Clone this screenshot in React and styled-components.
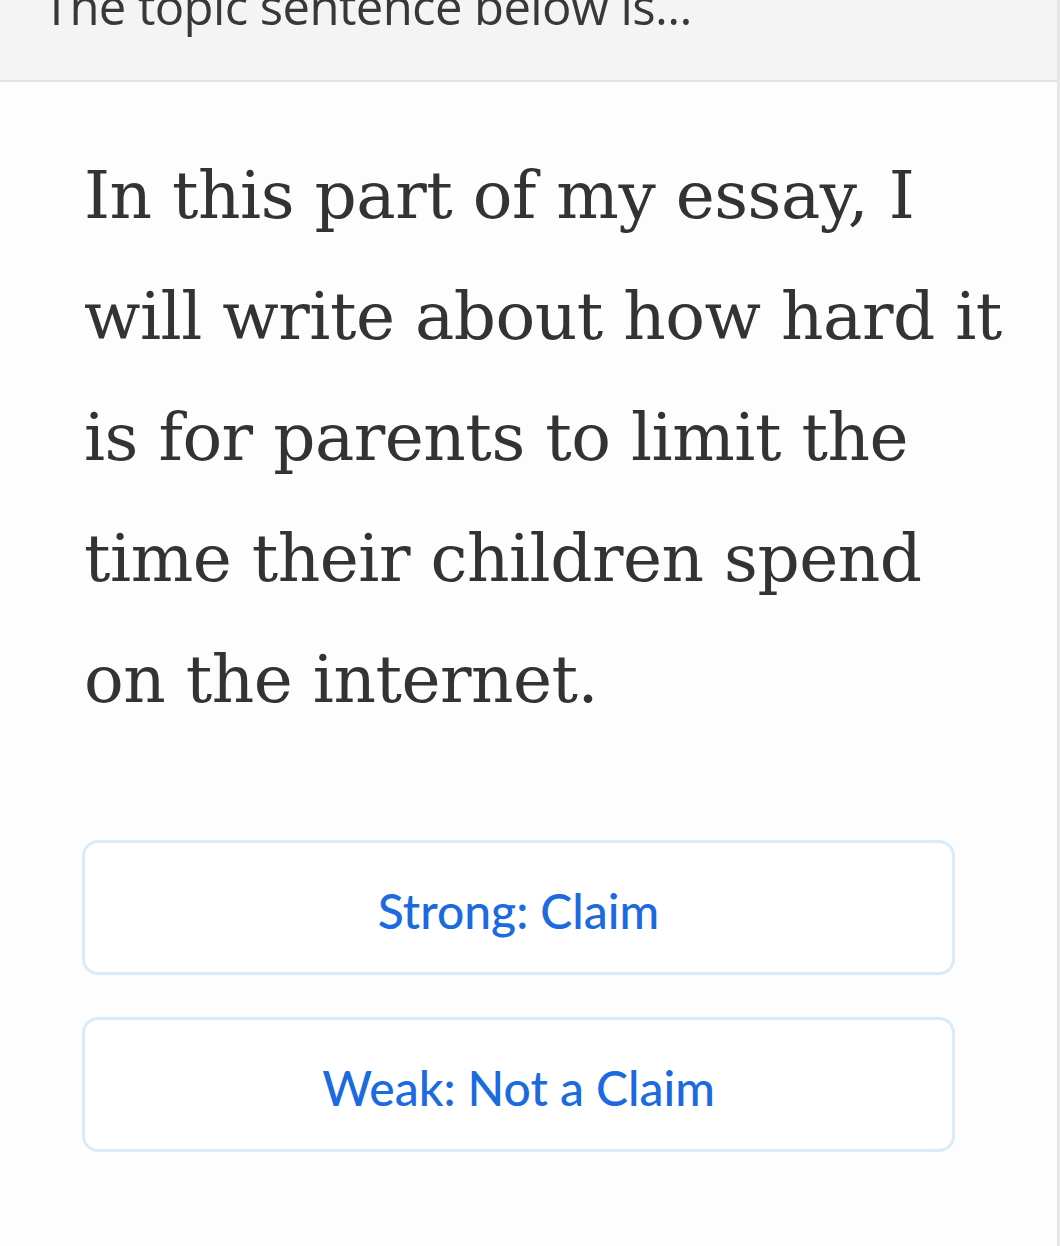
import React from 'react';
import styled, { createGlobalStyle } from 'styled-components';

const GlobalStyle = createGlobalStyle`
  html, body {
    margin: 0;
    padding: 0;
    background: #ffffff;
  }
`;

const Page = styled.div`
  width: 1060px;
  min-height: 1246px;
  box-sizing: border-box;
  border-right: 3px solid #e6e6e6;
  background: #fdfdfd;
  overflow: hidden;
`;

const Header = styled.header`
  height: 80px;
  background: #f4f4f4;
  border-bottom: 2px solid #e4e4e4;
  overflow: hidden;
`;

const Prompt = styled.h2`
  margin: -27px 0 0 43px;
  font-family: 'Open Sans', sans-serif;
  font-weight: 400;
  font-size: 49px;
  line-height: 66px;
  color: #383838;
  letter-spacing: -0.6px;
`;

const Body = styled.main`
  padding: 53px 20px 0 84px;
`;

const Sentence = styled.p`
  margin: 0;
  max-width: 926px;
  font-family: 'DejaVu Serif', Georgia, serif;
  font-size: 66px;
  line-height: 121px;
  color: #333333;
  letter-spacing: -0.5px;
`;

const Choices = styled.div`
  display: flex;
  flex-direction: column;
  gap: 42px;
  margin-top: 100px;
  width: 873px;
  margin-left: -2px;
`;

const Choice = styled.button`
  display: flex;
  align-items: center;
  justify-content: center;
  height: 135px;
  box-sizing: border-box;
  padding: 6px 0 0;
  background: #ffffff;
  border: 3px solid #d8ebfb;
  border-radius: 16px;
  font-family: 'Lato', 'Noto Sans', sans-serif;
  font-size: 48px;
  font-weight: 500;
  color: #1b6ae0;
  cursor: pointer;
`;

const choices = ['Strong: Claim', 'Weak: Not a Claim'];

export default function App() {
  return (
    <>
      <GlobalStyle />
      <Page>
        <Header>
          <Prompt>The topic sentence below is...</Prompt>
        </Header>
        <Body>
          <Sentence>
            In this part of my essay, I will write about how hard it is for
            parents to limit the time their children spend on the internet.
          </Sentence>
          <Choices>
            {choices.map((c) => (
              <Choice key={c}>{c}</Choice>
            ))}
          </Choices>
        </Body>
      </Page>
    </>
  );
}
